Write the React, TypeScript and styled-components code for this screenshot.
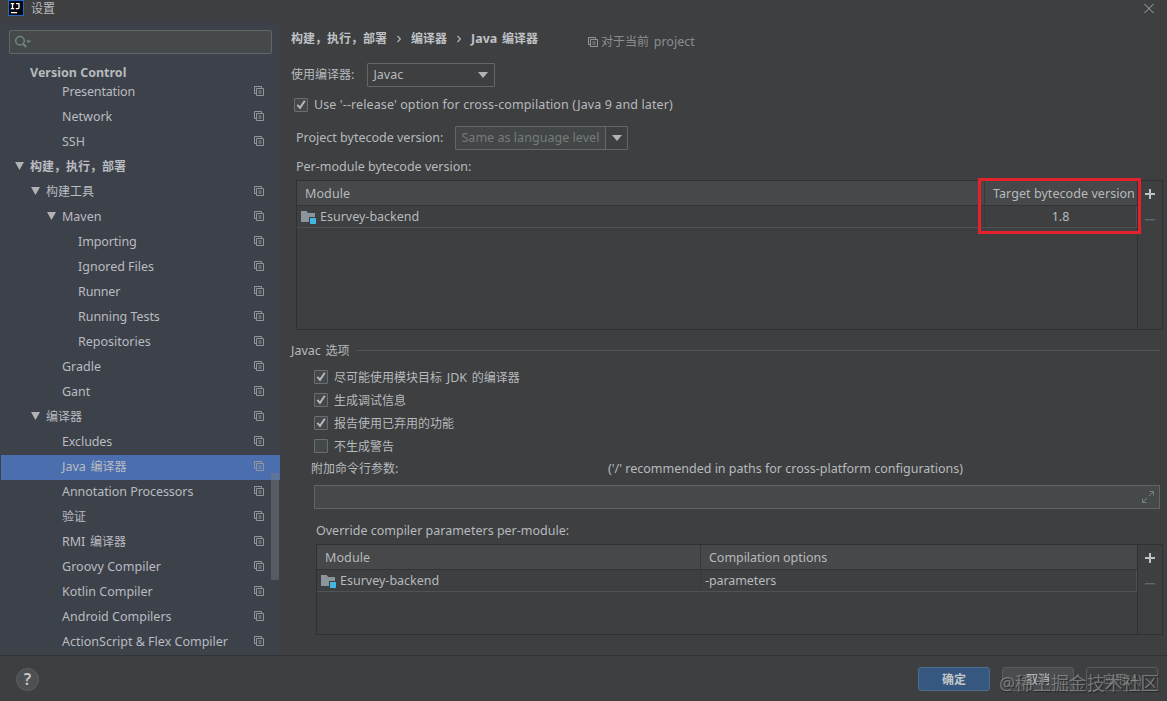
import React from "react";
import styled, { createGlobalStyle } from "styled-components";

const GlobalStyle = createGlobalStyle`
  * { box-sizing: border-box; }
  body { margin: 0; background: #3d3f41; overflow: hidden; }
`;

const Window = styled.div`
  position: relative;
  display: flex;
  flex-direction: column;
  width: 1167px;
  height: 701px;
  background: #3d3f41;
  color: #b7babd;
  font: 12px/16px "Noto Sans", "Noto Sans CJK SC", sans-serif;
  white-space: nowrap;
`;

const Latin = styled.span<{ $ls?: number; $ws?: number }>`
  font-size: 12.5px;
  letter-spacing: ${(p) => p.$ls ?? 0}px;
  word-spacing: ${(p) => p.$ws ?? 0}px;
`;

const TitleBar = styled.header`
  display: flex;
  align-items: center;
  height: 17px;
  padding: 0 12px 0 8px;
  gap: 7px;
  & > :first-child { margin-top: -1px; }
  & > :last-child { margin-left: auto; }
`;

const Body = styled.div`
  display: flex;
  height: 638px;
`;

const Sidebar = styled.nav`
  width: 280px;
  height: 638px;
  padding-top: 13px;
  background: linear-gradient(#3d3f41 0, #3d414a 10px);
  position: relative;
  overflow: hidden;
`;

const Search = styled.div`
  display: flex;
  align-items: center;
  width: 263px;
  height: 24px;
  margin-left: 9px;
  padding-left: 5px;
  border: 1px solid #626669;
  border-radius: 2px;
  background: #45494a;
`;

const Group = styled.div`
  height: 26px;
  padding: 11px 0 0 30px;
  font-weight: 700;
`;

const Row = styled.div<{ $depth: number; $selected?: boolean; $bold?: boolean }>`
  display: flex;
  align-items: center;
  height: 25px;
  padding: 0 16px 2px ${(p) => 14 + p.$depth * 16}px;
  margin-left: 1px;
  font-weight: ${(p) => (p.$bold ? 700 : 400)};
  color: #b9bcc1;
  background: ${(p) => (p.$selected ? "#4b6eaf" : "transparent")};
  & > svg:last-child { margin: 0 0 1px auto; }
`;

const ArrowSlot = styled.span`
  display: flex;
  width: 15px;
  margin-bottom: 1px;
  flex: none;
`;

const ScrollThumb = styled.div`
  position: absolute;
  right: 1px;
  top: 456px;
  width: 8px;
  height: 107px;
  background: rgba(120, 124, 130, 0.45);
`;

const Main = styled.main`
  display: flex;
  flex-direction: column;
  flex: 1;
  padding: 9px 4px 0 11px;
`;

const Line = styled.div<{ $h: number; $indent?: number; $gap?: number; $top?: number; $bottom?: number }>`
  display: flex;
  align-items: center;
  flex: none;
  height: ${(p) => p.$h}px;
  padding: ${(p) => p.$top ?? 0}px 0 ${(p) => p.$bottom ?? 0}px ${(p) => p.$indent ?? 0}px;
  gap: ${(p) => p.$gap ?? 0}px;
`;

const Crumbs = styled.div`
  display: flex;
  align-items: center;
  width: 297px;
  gap: 10px;
  color: #bfc2c5;
  font-weight: 700;
`;

const Scope = styled.div`
  display: flex;
  align-items: center;
  gap: 3px;
  padding-top: 5px;
  color: #8b8e90;
`;

const Select = styled.div<{ $w: number; $disabled?: boolean }>`
  display: flex;
  align-items: center;
  justify-content: space-between;
  width: ${(p) => p.$w}px;
  height: 24px;
  padding: 0 ${(p) => (p.$disabled ? 0 : 6)}px 0 5px;
  border: 1px solid #646668;
  border-radius: 1px;
  color: ${(p) => (p.$disabled ? "#777b7d" : "#b7babd")};
  background: ${(p) => (p.$disabled ? "#424647" : "#3d3f41")};
`;

const SelectButton = styled.span`
  display: flex;
  align-items: center;
  justify-content: center;
  width: 22px;
  height: 22px;
  border-left: 1px solid #646668;
  background: #3d3f41;
`;

const Box = styled.span`
  display: flex;
  width: 14px;
  height: 14px;
  margin-bottom: 1px;
  border: 1px solid #6b6d6e;
  border-radius: 1px;
  background: #43494a;
`;

const TableFrame = styled.section<{ $h: number; $indent: number }>`
  display: flex;
  flex: none;
  height: ${(p) => p.$h}px;
  margin-left: ${(p) => p.$indent}px;
  border: 1px solid #2f3132;
`;

const Grid = styled.div`
  flex: 1;
  border-right: 1px solid #2f3132;
`;

const HeaderRow = styled.div<{ $cols: string }>`
  display: grid;
  grid-template-columns: ${(p) => p.$cols};
  height: 25px;
  background: #464849;
  border-bottom: 1px solid #323435;
  & > div { padding-top: 2px; }
`;

const DataRow = styled.div<{ $cols: string }>`
  display: grid;
  grid-template-columns: ${(p) => p.$cols};
  height: 22px;
  border-bottom: 1px solid #4f5253;
  border-right: 1px solid #4f5253;
`;

const Cell = styled.div<{ $pad: number; $rule?: boolean; $center?: boolean }>`
  display: flex;
  align-items: center;
  gap: 4px;
  padding-left: ${(p) => p.$pad}px;
  justify-content: ${(p) => (p.$center ? "center" : "flex-start")};
  border-left: ${(p) => (p.$rule ? "1px solid #363839" : "0")};
`;

const Tools = styled.div`
  display: flex;
  flex-direction: column;
  align-items: center;
  width: 24px;
  padding-top: 8px;
  gap: 15px;
`;

const Rule = styled.span`
  flex: 1;
  height: 1px;
  margin: 0 3px 2px 0;
  background: #515455;
`;

const Params = styled.div`
  display: flex;
  align-items: center;
  justify-content: flex-end;
  flex: none;
  height: 24px;
  margin: 5px 3px 0 23px;
  padding-right: 5px;
  border: 1px solid #626566;
  background: #45494a;
`;

const ArgLabel = styled.span`
  width: 297px;
`;

const Highlight = styled.div`
  position: absolute;
  left: 978px;
  top: 178px;
  width: 163px;
  height: 56px;
  border: 3px solid #e5222b;
`;

const Footer = styled.footer`
  display: flex;
  align-items: center;
  height: 46px;
  padding: 1px 9px 0 16px;
  gap: 12px;
  border-top: 1px solid #303234;
`;

const Help = styled.span`
  display: flex;
  align-items: center;
  justify-content: center;
  width: 23px;
  height: 23px;
  margin-right: auto;
  border: 1px solid #5d6062;
  border-radius: 50%;
  background: #4c5052;
  color: #c5c8ca;
  font-size: 16px;
  font-weight: 600;
`;

const Button = styled.span<{ $kind: "primary" | "normal" | "disabled" }>`
  display: flex;
  align-items: center;
  justify-content: center;
  width: 72px;
  height: 24px;
  padding-top: 1px;
  border: 1px solid ${(p) => (p.$kind === "primary" ? "#4c708c" : "#5a5d5f")};
  border-radius: 3px;
  font-weight: ${(p) => (p.$kind === "primary" ? 700 : 400)};
  color: ${(p) => (p.$kind === "disabled" ? "#77797b" : "#c3c6c9")};
  background: ${(p) => (p.$kind === "primary" ? "#365880" : p.$kind === "normal" ? "#4a4d4f" : "transparent")};
`;

const Watermark = styled.div`
  position: absolute;
  left: 999px;
  top: 670px;
  font-size: 18px;
  line-height: 26px;
  letter-spacing: -0.1px;
  color: rgba(160, 162, 164, 0.62);
  text-shadow: 1px 1px 1px rgba(20, 20, 20, 0.6);
`;

const CopyIcon = () => (
  <svg width="10" height="10" viewBox="0 0 10 10" fill="none" stroke="#92969b">
    <path d="M2 7.500H.5v-7h7V2" />
    <path d="M2.500 2.500h7v7h-7z M4.500 5h3M4.500 7h3" />
  </svg>
);

const Chevron = () => (
  <svg width="4" height="8" viewBox="0 0 4 8" fill="none" stroke="#b0b3b5" strokeWidth="1.2">
    <path d="M.5 1L3.3 4 .5 7" />
  </svg>
);

const Down = ({ w = 10, h = 8 }: { w?: number; h?: number }) => (
  <svg width={w} height={h} viewBox="0 0 10 8" preserveAspectRatio="none" fill="#b0b3b5">
    <path d="M0 0h10L5 8z" />
  </svg>
);

const ModuleIcon = () => (
  <svg width="15" height="14" viewBox="0 0 15 14">
    <path d="M0 1h5.5l1.6 2H14v9H0z" fill="#8d959c" />
    <path d="M8 7h7v7H8z" fill="#3d3f41" />
    <path d="M9 8h6v6H9z" fill="#40b6e0" />
  </svg>
);

const Plus = () => (
  <svg width="10" height="10" viewBox="0 0 10 10" stroke="#bfc2c4" strokeWidth="2">
    <path d="M5 0v10M0 5h10" />
  </svg>
);

const Minus = () => (
  <svg width="10" height="10" viewBox="0 0 10 10" stroke="#626567" strokeWidth="1.5">
    <path d="M0 5.700h10" />
  </svg>
);

const Check = ({ on = true }: { on?: boolean }) => (
  <Box>
    {on && (
      <svg width="12" height="12" viewBox="0 0 12 12" fill="none" stroke="#b5b8ba" strokeWidth="2">
        <path d="M2.300 5.800l2.700 3L9.800 1.800" />
      </svg>
    )}
  </Box>
);

/* Splits a label so that Latin runs take their own size beside the Chinese glyphs. */
const T = ({ children, ls }: { children: string; ls?: number }) => {
  const parts = children.split(/([\u3000-\u9fff\uff00-\uffef]+)/);
  const ws = parts.length > 1 ? 1.5 : 0;
  return (
    <span>
      {parts.map((s, i) => (i % 2 ? s : s && <Latin key={i} $ls={ls} $ws={ws}>{s}</Latin>))}
    </span>
  );
};

type Node = { t: string; d: number; open?: boolean; bold?: boolean; plain?: boolean; sel?: boolean; ls?: number };
const tree: Node[] = [
  { t: "Presentation", d: 2, ls: -0.15 },
  { t: "Network", d: 2 },
  { t: "SSH", d: 2 },
  { t: "构建，执行，部署", d: 0, open: true, bold: true, plain: true },
  { t: "构建工具", d: 1, open: true },
  { t: "Maven", d: 2, open: true },
  { t: "Importing", d: 3, ls: -0.1 },
  { t: "Ignored Files", d: 3 },
  { t: "Runner", d: 3, ls: -0.15 },
  { t: "Running Tests", d: 3, ls: -0.05 },
  { t: "Repositories", d: 3 },
  { t: "Gradle", d: 2 },
  { t: "Gant", d: 2 },
  { t: "编译器", d: 1, open: true },
  { t: "Excludes", d: 2, ls: -0.1 },
  { t: "Java 编译器", d: 2, sel: true },
  { t: "Annotation Processors", d: 2, ls: -0.06 },
  { t: "验证", d: 2 },
  { t: "RMI 编译器", d: 2 },
  { t: "Groovy Compiler", d: 2, ls: 0.04 },
  { t: "Kotlin Compiler", d: 2 },
  { t: "Android Compilers", d: 2 },
  { t: "ActionScript & Flex Compiler", d: 2 },
];

const options: [string, boolean][] = [
  ["尽可能使用模块目标 JDK 的编译器", true],
  ["生成调试信息", true],
  ["报告使用已弃用的功能", true],
  ["不生成警告", false],
];

export default function App() {
  return (
    <Window>
      <GlobalStyle />
      <TitleBar>
        <svg width="16" height="16" viewBox="0 0 16 16">
          <rect width="16" height="16" fill="#2269c4" />
          <rect x="1" y="1" width="14" height="14" fill="#07080c" />
          <path d="M2.800 3.600h3.400M4.500 3.600v5M2.800 8.600h3.400M8 3.600h3v3.800q0 1.200-1.200 1.200H7.800M3 12.600h6" stroke="#fff" strokeWidth="1.3" fill="none" />
        </svg>
        <span>设置</span>
        <svg width="12" height="12" viewBox="0 0 12 12" stroke="#a9acae" fill="none">
          <path d="M1.500 1l9 9M10.500 1l-9 9" />
        </svg>
      </TitleBar>
      <Body>
        <Sidebar>
          <Search>
            <svg width="18" height="14" viewBox="0 0 18 14" fill="none" stroke="#6f8583" strokeWidth="1.5">
              <circle cx="5" cy="5.800" r="4.300" />
              <path d="M8.200 9l3 3" strokeWidth="2" />
              <path d="M11 5.500h5L13.500 8z" fill="#7c8b8a" stroke="none" />
            </svg>
          </Search>
          <Group><T>Version Control</T></Group>
          {tree.map((n) => (
            <Row key={n.t} $depth={n.d} $selected={n.sel} $bold={n.bold}>
              <ArrowSlot>{n.open && <Down w={9} h={8} />}</ArrowSlot>
              <T ls={n.ls}>{n.t}</T>
              {!n.plain && <CopyIcon />}
            </Row>
          ))}
          <ScrollThumb />
        </Sidebar>
        <Main>
          <Line $h={26}>
            <Crumbs>
              <span>构建，执行，部署</span>
              <Chevron />
              <span>编译器</span>
              <Chevron />
              <T>Java 编译器</T>
            </Crumbs>
            <Scope><CopyIcon /><T>对于当前 project</T></Scope>
          </Line>
          <Line $h={46} $gap={13}>
            <T>使用编译器:</T>
            <Select $w={128}><T>Javac</T><Down h={6} /></Select>
          </Line>
          <Line $h={14} $indent={3} $gap={6}>
            <Check /><T ls={0.105}>Use '--release' option for cross-compilation (Java 9 and later)</T>
          </Line>
          <Line $h={52} $indent={5} $gap={12}>
            <T>Project bytecode version:</T>
            <Select $w={173} $disabled>
              <T ls={0.04}>Same as language level</T>
              <SelectButton><Down h={6} /></SelectButton>
            </Select>
          </Line>
          <Line $h={16} $indent={5} $bottom={10}><T>Per-module bytecode version:</T></Line>
          <TableFrame $h={150} $indent={5}>
            <Grid>
              <HeaderRow $cols="687px 1fr">
                <Cell $pad={8}><T ls={0.1}>Module</T></Cell>
                <Cell $pad={8} $rule><T ls={0.06}>Target bytecode version</T></Cell>
              </HeaderRow>
              <DataRow $cols="687px 1fr">
                <Cell $pad={4}><ModuleIcon /><T>Esurvey-backend</T></Cell>
                <Cell $pad={0} $rule $center><T>1.8</T></Cell>
              </DataRow>
            </Grid>
            <Tools><Plus /><Minus /></Tools>
          </TableFrame>
          <Line $h={36} $gap={6} $top={6}><T>Javac 选项</T><Rule /></Line>
          {options.map(([label, on]) => (
            <Line key={label} $h={23} $indent={23} $gap={6}><Check on={on} /><T>{label}</T></Line>
          ))}
          <Line $h={22} $indent={20}>
            <ArgLabel><T>附加命令行参数:</T></ArgLabel>
            <T>('/' recommended in paths for cross-platform configurations)</T>
          </Line>
          <Params>
            <svg width="12" height="12" viewBox="0 0 12 12" fill="none" stroke="#7a8080">
              <path d="M7 5l4-4M7.500 .5h4v4M5 7l-4 4M.5 7.500v4h4" />
            </svg>
          </Params>
          <Line $h={35} $indent={25} $top={8}><T>Override compiler parameters per-module:</T></Line>
          <TableFrame $h={91} $indent={25}>
            <Grid>
              <HeaderRow $cols="383px 1fr">
                <Cell $pad={8}><T ls={0.1}>Module</T></Cell>
                <Cell $pad={8} $rule><T ls={-0.04}>Compilation options</T></Cell>
              </HeaderRow>
              <DataRow $cols="383px 1fr">
                <Cell $pad={4}><ModuleIcon /><T>Esurvey-backend</T></Cell>
                <Cell $pad={4} $rule><T ls={-0.08}>-parameters</T></Cell>
              </DataRow>
            </Grid>
            <Tools><Plus /><Minus /></Tools>
          </TableFrame>
        </Main>
      </Body>
      <Footer>
        <Help>?</Help>
        <Button $kind="primary">确定</Button>
        <Button $kind="normal">取消</Button>
        <Button $kind="disabled">应用(A)</Button>
      </Footer>
      <Highlight />
      <Watermark>@稀土掘金技术社区</Watermark>
    </Window>
  );
}
